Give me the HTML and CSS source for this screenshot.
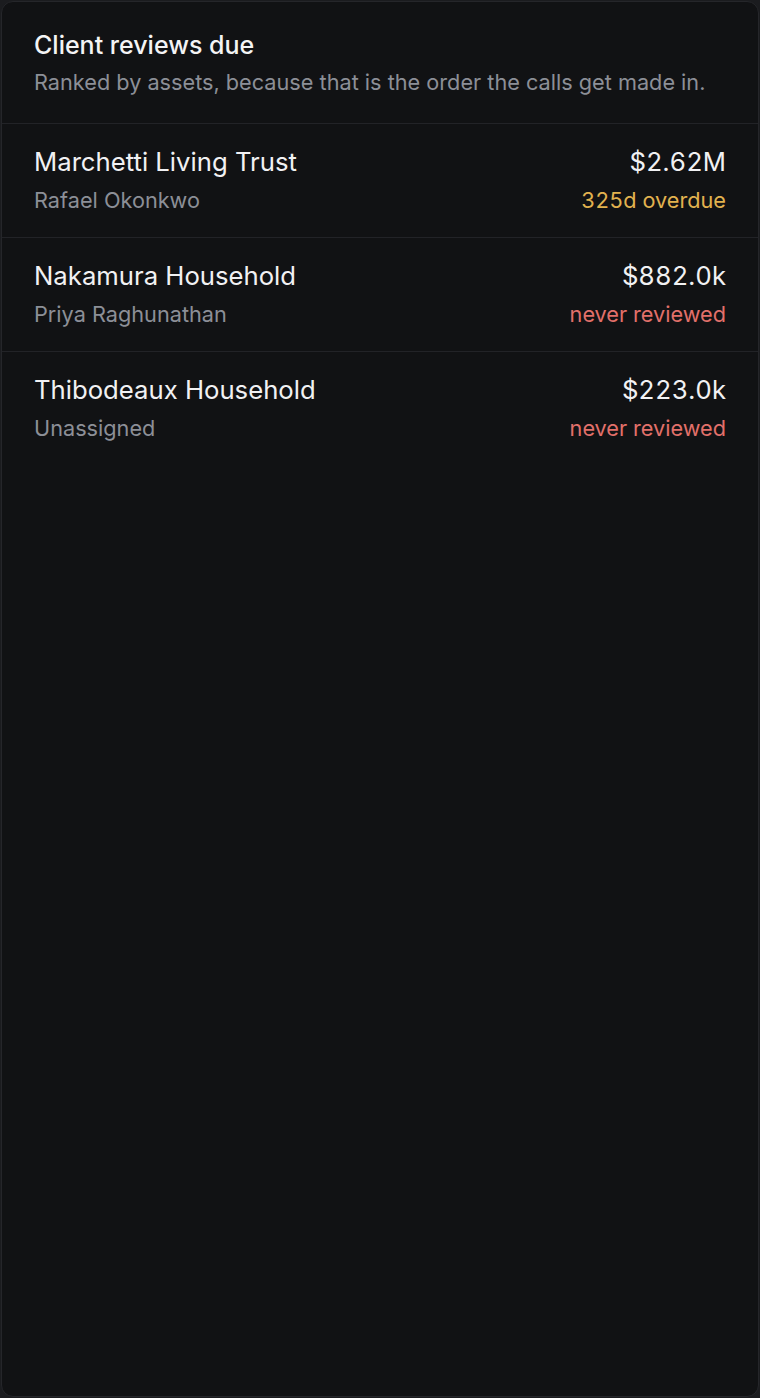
FILE: index.html
```html
<!DOCTYPE html>
<html lang="en">
<head>
    <meta charset="UTF-8">
    <meta name="viewport" content="width=device-width, initial-scale=1.0">
    <title>Client reviews due</title>
    <link rel="stylesheet" href="styles.css">
</head>
<body>
    <div class="card">
        <div class="card-header">
            <h2>Client reviews due</h2>
            <p>Ranked by assets, because that is the order the calls get made in.</p>
        </div>
        <div class="row">
            <div class="left">
                <div class="name">Marchetti Living Trust</div>
                <div class="sub">Rafael Okonkwo</div>
            </div>
            <div class="right">
                <div class="amount">$2.62M</div>
                <div class="status overdue">325d overdue</div>
            </div>
        </div>
        <div class="row">
            <div class="left">
                <div class="name">Nakamura Household</div>
                <div class="sub">Priya Raghunathan</div>
            </div>
            <div class="right">
                <div class="amount">$882.0k</div>
                <div class="status never">never reviewed</div>
            </div>
        </div>
        <div class="row">
            <div class="left">
                <div class="name">Thibodeaux Household</div>
                <div class="sub">Unassigned</div>
            </div>
            <div class="right">
                <div class="amount">$223.0k</div>
                <div class="status never">never reviewed</div>
            </div>
        </div>
    </div>
</body>
</html>
```

FILE: styles.css
```css
html, body {
    height: 100%;
}

body {
    font-family: Inter, "Noto Sans", sans-serif;
    background-color: #1b1c1f;
    margin: 0;
    padding: 1px;
    box-sizing: border-box;
}

.card {
    height: 100%;
    box-sizing: border-box;
    background-color: #111214;
    border: 1px solid #25262a;
    border-radius: 12px;
}

.card-header {
    padding: 27px 32px 26px;
    border-bottom: 1px solid #222327;
}

h2 {
    margin: 0;
    font-size: 25px;
    line-height: 32px;
    font-weight: 500;
    color: #f4f4f5;
}

.card-header p {
    margin: 6px 0 0;
    font-size: 21.7px;
    line-height: 30px;
    color: #8c8f97;
}

.row {
    display: flex;
    justify-content: space-between;
    padding: 22px 32px 22px;
    border-bottom: 1px solid #222327;
}

.row:last-child {
    border-bottom: none;
}

.name, .amount {
    font-size: 25.7px;
    line-height: 32px;
    color: #f1f1f3;
}

.sub, .status {
    margin-top: 7px;
    font-size: 21.7px;
    line-height: 30px;
    color: #8c8f97;
}

.right {
    text-align: right;
    font-variant-numeric: tabular-nums;
}

.status.overdue {
    color: #e2b24f;
}

.status.never {
    color: #e2706a;
}
```
